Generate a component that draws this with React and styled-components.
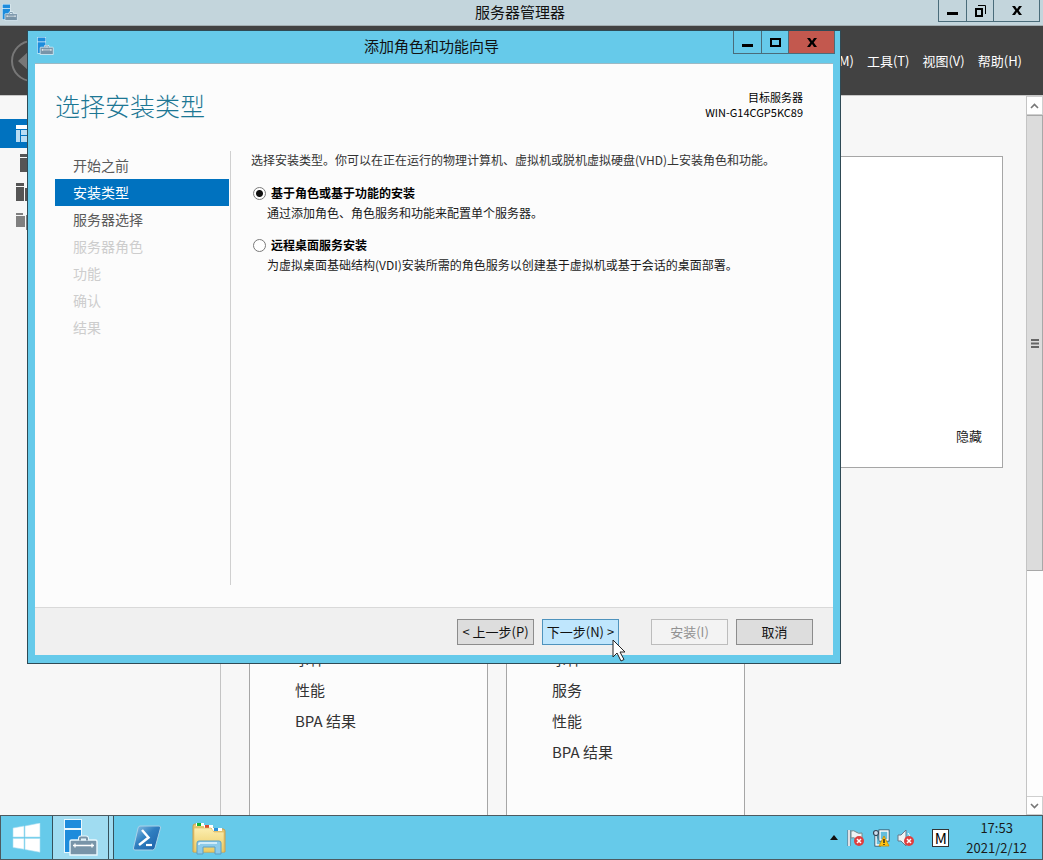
import { useState } from "react";
import styled, { createGlobalStyle, css } from "styled-components";

const GlobalStyle = createGlobalStyle`
  * {
    box-sizing: border-box;
  }
  body {
    margin: 0;
    overflow: hidden;
    font-family: "Noto Sans CJK SC", "Noto Sans", sans-serif;
    font-size: 12px;
    color: #1a1a1a;
  }
  button {
    font-family: inherit;
    padding: 0;
  }
`;

const Desktop = styled.div`
  position: relative;
  display: flex;
  flex-direction: column;
  height: 100vh;
  background: #f7f7f7;
`;

//shared by the two windows
const TitleBar = styled.header`
  display: grid;
  grid-template-columns: 1fr auto 1fr;
  align-items: start;
  flex: none;
  height: ${(props) => props.$height};
  padding-right: ${(props) => props.$right};
`;

const TitleIcon = styled.span`
  display: flex;
  padding: ${(props) => props.$padding};
`;

const TitleText = styled.h1`
  margin: 0;
  font-size: 15px;
  font-weight: 400;
  line-height: ${(props) => props.$line};
  color: #111;
`;

const WindowButtons = styled.div`
  display: flex;
  justify-self: end;
  border: 1px solid #4a6c7a;
  border-top: none;
`;

const WindowButton = styled.button`
  display: flex;
  align-items: center;
  justify-content: center;
  width: ${(props) => (props.$close ? "46px" : "27px")};
  height: ${(props) => props.$height || "22px"};
  border: none;
  border-left: ${(props) => (props.$first ? "none" : "1px solid #4a6c7a")};
  background: ${(props) => props.$color || "transparent"};
`;

const ManagerTitle = styled.div`
  flex: none;
  background: #c3d5dc;
  border-bottom: 1px solid #a3adb1;
`;

const Banner = styled.div`
  display: flex;
  flex: none;
  align-items: center;
  justify-content: space-between;
  height: 69px;
  padding: 0 21px 0 11px;
  background: #424242;
`;

const BackButton = styled.button`
  display: flex;
  border: none;
  background: none;
`;

const MenuBar = styled.nav`
  display: flex;
  gap: 13px;
`;

const MenuItem = styled.button`
  border: none;
  background: none;
  color: #fff;
  font-size: 13px;
  line-height: 20px;
`;

const ManagerBody = styled.div`
  display: flex;
  flex: 1;
  min-height: 0;
  border-top: 1px solid #c8c8c8;
`;

const SideBar = styled.nav`
  display: flex;
  flex-direction: column;
  flex: none;
  width: 221px;
  padding-top: 23px;
  border-right: 1px solid #c4c4c4;
`;

const SideLink = styled.button`
  display: flex;
  align-items: center;
  height: 29px;
  padding-left: 16px;
  border: none;
  background: ${(props) => (props.$selected ? "#0072bf" : "transparent")};
`;

const Dashboard = styled.main`
  display: flex;
  flex-direction: column;
  flex: 1;
  gap: 60px;
  min-width: 0;
  padding: 60px 23px 0 28px;
`;

const WelcomeCard = styled.section`
  display: flex;
  flex: none;
  align-items: flex-end;
  justify-content: flex-end;
  height: 312px;
  padding: 20px;
  border: 1px solid #a6a6a6;
  background: #fff;
`;

const HideButton = styled.button`
  border: none;
  background: none;
  color: #222;
  font-size: 13px;
  line-height: 22px;
`;

const Tiles = styled.div`
  display: flex;
  flex: 1;
  gap: 18px;
  min-height: 0;
`;

const Tile = styled.ul`
  width: 239px;
  margin: 0;
  padding: 114px 0 0 45px;
  border: 1px solid #a6a6a6;
  border-bottom: none;
  background: #fcfcfc;
  list-style: none;
`;

const TileRow = styled.li`
  font-size: 15px;
  line-height: 31px;
  color: #333;
`;

const ScrollBar = styled.div`
  display: flex;
  flex-direction: column;
  flex: none;
  width: 17px;
  border-left: 1px solid #c4c4c4;
  background: #fdfdfd;
`;

const ScrollButton = styled.button`
  display: flex;
  align-items: center;
  justify-content: center;
  height: 19px;
  border: 1px solid #cfcfcf;
  border-left: none;
  background: #fff;
`;

const ScrollTrack = styled.div`
  flex: 1;
`;

const ScrollThumb = styled.div`
  display: flex;
  align-items: center;
  justify-content: center;
  height: 67%;
  border: 1px solid #a8a8a8;
  border-left: none;
  background: #dcdcdc;
`;

const TaskBar = styled.footer`
  display: flex;
  flex: none;
  align-items: stretch;
  height: 45px;
  border: 1px solid #4d5a60;
  background: #66caea;
`;

const TaskButton = styled.button`
  display: flex;
  align-items: center;
  justify-content: center;
  width: ${(props) => props.$width};
  border: none;
  background: transparent;
  ${(props) =>
    props.$active &&
    css`
      border: 1px solid #35515c;
      border-width: 0 1px;
      background: #a0dcf1;
    `}
`;

const TaskStack = styled.span`
  width: 5px;
  border-right: 1px solid #35515c;
  background: #a0dcf1;
`;

const Tray = styled.div`
  display: flex;
  align-items: center;
  gap: 7px;
  margin-left: auto;
  padding-right: 15px;
`;

const TrayButton = styled.button`
  display: flex;
  border: none;
  background: none;
`;

const InputMode = styled.button`
  width: 17px;
  height: 18px;
  margin: 0 10px;
  border: 1px solid #333;
  background: #fff;
  color: #000;
  font-size: 15px;
  line-height: 16px;
`;

const Clock = styled.time`
  font-size: 13px;
  line-height: 20px;
  text-align: center;
`;

//wizard window, lies over the server manager
const Wizard = styled.section`
  position: absolute;
  top: 30px;
  right: 202px;
  bottom: 196px;
  left: 27px;
  display: flex;
  flex-direction: column;
  border: 1px solid #2f4a55;
  background: #66caea;
`;

const WizardClient = styled.form`
  display: flex;
  flex: 1;
  flex-direction: column;
  margin: 0 7px 8px;
  background: #fcfcfc;
  border-top: 1px solid #9db9c4;
`;

const WizardHead = styled.div`
  display: flex;
  align-items: flex-start;
  justify-content: space-between;
  height: 87px;
  padding: 26px 30px 0 20px;
`;

const WizardTitle = styled.h2`
  margin: 0;
  color: #1c7794;
  font-size: 25px;
  font-weight: 300;
  line-height: 30px;
`;

const Target = styled.p`
  margin: 0;
  font-size: 11px;
  line-height: 15px;
  text-align: right;
  color: #000;
`;

const WizardBody = styled.div`
  display: flex;
  flex: 1;
  padding: 0 20px 22px;
`;

const Steps = styled.nav`
  display: flex;
  flex-direction: column;
  flex: none;
  width: 176px;
  padding: 1px 1px 0 0;
  border-right: 1px solid #d0d0d0;
`;

const Step = styled.button`
  height: 27px;
  padding-left: 18px;
  border: none;
  background: ${(props) => (props.$selected ? "#0072bf" : "transparent")};
  color: ${(props) => (props.$selected ? "#fff" : "#5a5a5a")};
  font-size: 14px;
  line-height: 27px;
  text-align: left;
  &:disabled {
    color: #cdcdcd;
  }
`;

const Options = styled.fieldset`
  flex: 1;
  min-width: 0;
  margin: 0;
  padding: 0 0 0 20px;
  border: none;
`;

const Intro = styled.p`
  margin: 0 0 14px;
  line-height: 18px;
  color: #333;
`;

const Option = styled.div`
  margin-bottom: 12px;
`;

const OptionLabel = styled.label`
  display: flex;
  align-items: center;
  gap: 5px;
  padding-left: 2px;
  font-weight: 700;
  line-height: 20px;
  color: #000;
`;

const Radio = styled.input`
  appearance: none;
  width: 13px;
  height: 13px;
  margin: 0;
  border: 1px solid #7a7a7a;
  border-radius: 50%;
  background: #fff;
  &:checked {
    background: radial-gradient(circle, #111 3px, #fff 4px);
  }
`;

const OptionText = styled.p`
  margin: 0;
  padding-left: 16px;
  line-height: 20px;
`;

const WizardFoot = styled.div`
  display: flex;
  justify-content: flex-end;
  gap: 8px;
  height: 48px;
  padding: 11px 20px 0 0;
  border-top: 1px solid #d9d9d9;
  background: #f0f0f0;
`;

const FootButton = styled.button`
  position: relative;
  width: 77px;
  height: 26px;
  margin-right: ${(props) => (props.$primary ? "24px" : "0")};
  border: 1px solid ${(props) => (props.$primary ? "#4f93bd" : "#8c8c8c")};
  background: ${(props) => (props.$primary ? "#bfe6fd" : "#dddddd")};
  color: #111;
  font-size: 13px;
  line-height: 20px;
  white-space: nowrap;
  &:disabled {
    border-color: #bcbcbc;
    background: #f3f3f3;
    color: #919191;
  }
`;

const Pointer = styled.svg`
  position: absolute;
  top: 19px;
  left: 69px;
`;

const ServerIcon = ({ width = 16, height = 17 }) => (
  <svg width={width} height={height} viewBox="0 0 34 37">
    <path d="M0 0h18v34H0z" fill="#e9f7fd" />
    <path d="M1 1h16v8H1zM1 11h16v22H1z" fill="#1d8cdc" />
    <path d="M16 22v-2.500q0-1 1-1h5q1 0 1 1V22" fill="none" stroke="#e9f7fd" strokeWidth="4" />
    <path d="M6 22.500q0-1.500 1.500-1.500h24q1.500 0 1.500 1.500V36H6z" fill="#7894a8" stroke="#e9f7fd" strokeWidth="1.400" />
    <path d="M16 21.500v-2q0-1 1-1h5q1 0 1 1v2" fill="none" stroke="#7894a8" strokeWidth="2" />
    <path d="M9 26.500h21M11 24.500v4M28 24.500v4" stroke="#fff" strokeWidth="1.300" />
  </svg>
);

const MinimizeIcon = () => (
  <svg width="11" height="11">
    <path d="M0 7h11v3H0z" />
  </svg>
);

const MaximizeIcon = () => (
  <svg width="11" height="9">
    <path d="M1 1h9v7H1z" fill="none" stroke="#000" strokeWidth="2" />
  </svg>
);

const RestoreIcon = () => (
  <svg width="11" height="12">
    <path d="M3 .500h7.500V9" fill="none" stroke="#000" />
    <path d="M1 4h6v7H1z" fill="none" stroke="#000" strokeWidth="2" />
  </svg>
);

const CloseIcon = () => (
  <svg width="10" height="9">
    <path d="M0 0h3l2 3 2-3h3L6.700 4.500 10 9H7L5 6 3 9H0l3.300-4.500z" />
  </svg>
);

const BackIcon = () => (
  <svg width="42" height="42" viewBox="0 0 42 42">
    <circle cx="21" cy="21" r="20" fill="none" stroke="#777" strokeWidth="2" />
    <path d="M7 21l11-10v7h15v6H18v7z" fill="#777" />
  </svg>
);

const Chevron = ({ down }) => (
  <svg width="9" height="6">
    <path d={down ? "M1 1l3.500 3.500L8 1" : "M1 5l3.500-3.500L8 5"} fill="none" stroke="#777" strokeWidth="1.600" />
  </svg>
);

const sideIcons = [
  <svg key="dashboard" width="18" height="17">
    <path d="M0 0h18v4H0z" fill="#fff" />
    <path d="M0 5h4v12H0zM5 5h6v5H5zM5 11h6v6H5zM12 5h6v12h-6z" fill="#b9dcf3" />
  </svg>,
  <svg key="local" width="18" height="18">
    <path d="M4 0h12v3H4zM4 4h12v14H4z" fill="#555" />
  </svg>,
  <svg key="all" width="18" height="18">
    <path d="M0 0h8v3H0zM0 4h8v14H0zM9 5h8v13H9z" fill="#555" />
  </svg>,
  <svg key="files" width="18" height="18">
    <path d="M0 1h7v2H0zM0 4h9v11H0zM10 3h7v15h-7z" fill="#808080" />
  </svg>,
];

const WindowsIcon = () => (
  <svg width="30" height="30" viewBox="0 0 30 30" fill="#fff" stroke="#a8def2" strokeWidth="0.600">
    <path d="M1 5l11-2v11H1zM13 3l15-3v14H13zM1 15.500h11v10.700L1 24.500zM13 15.500h15v13.800l-15-2.800z" />
  </svg>
);

const PowerShellIcon = () => (
  <svg width="30" height="28" viewBox="0 0 30 28">
    <defs>
      <linearGradient id="shell" x1="0" y1="0" x2="1" y2="1">
        <stop offset="0" stopColor="#8fc6e8" />
        <stop offset="0.45" stopColor="#2f7fc0" />
        <stop offset="1" stopColor="#1d5ea6" />
      </linearGradient>
    </defs>
    <path d="M8 2h19q2 0 1.500 2L23 24q-.5 2-2.500 2H3q-2 0-1.500-2L6 4q.5-2 2-2z" fill="url(#shell)" stroke="#a9d2e8" />
    <path d="M10 6l6.500 7.500L7 21" fill="none" stroke="#fff" strokeWidth="2.500" />
    <path d="M14 21h6" stroke="#fff" strokeWidth="2.200" />
  </svg>
);

const FolderIcon = () => (
  <svg width="34" height="34" viewBox="0 0 34 34">
    <defs>
      <linearGradient id="folder" x1="0" y1="0" x2="0" y2="1">
        <stop offset="0" stopColor="#fbeeb0" />
        <stop offset="1" stopColor="#eccb62" />
      </linearGradient>
    </defs>
    <path d="M1 31V5q0-2 2-2h7l2 2h8l2 3h9q2 0 2 2v21z" fill="#e8c873" stroke="#c79e4c" />
    <path d="M4 2h8v3H4zM12 4h9v3h-9zM20 7h10v3H20z" fill="#fff" />
    <path d="M5 2h4v3H5z" fill="#13b535" />
    <path d="M13 4h4v3h-4z" fill="#d94e31" />
    <path d="M22 7h4v3h-4z" fill="#2990dc" />
    <path d="M2 7h17l3 4h10v20H2z" fill="url(#folder)" stroke="#dbb65c" strokeWidth="0.600" />
    <path d="M5 33V22q0-2 2-2h20q2 0 2 2v11h-6v-7H11v7z" fill="#8dcbea" stroke="#5b9fc5" />
    <path d="M7 24v-1q0-1 1-1h17" fill="none" stroke="#e6f7ff" strokeWidth="1.500" />
  </svg>
);

const ErrorBadge = ({ x, y }) => (
  <g>
    <circle cx={x} cy={y} r="5" fill="#df3f3f" />
    <path d={`M${x - 2} ${y - 2}l4 4m0-4l-4 4`} stroke="#fff" strokeWidth="1.500" />
  </g>
);

const trayIcons = [
  {
    label: "操作中心",
    icon: (
      <svg width="18" height="18">
        <path d="M2 1v16" stroke="#667" strokeWidth="3" />
        <path d="M2 1v16" stroke="#fff" strokeWidth="1.600" />
        <path d="M4 2q3-1 5 1t6 1v7q-4 1-6-1t-5-1z" fill="#eef3f5" stroke="#788" />
        <ErrorBadge x={12} y={12} />
      </svg>
    ),
  },
  {
    label: "网络",
    icon: (
      <svg width="18" height="18">
        <path d="M8 2h8v9H8zM4 7v9h5" fill="#65bddb" stroke="#345" strokeWidth="3" />
        <path d="M8 2h8v9H8zM4 7v9h5" fill="#65bddb" stroke="#fff" strokeWidth="1.400" />
        <circle cx="4" cy="4" r="2.500" fill="#cde" stroke="#345" strokeWidth="1.200" />
        <path d="M12 7l5 10H7z" fill="#ffc414" stroke="#c98a00" strokeWidth="0.800" />
        <path d="M12 10v4M12 15v1" stroke="#222" strokeWidth="1.400" />
      </svg>
    ),
  },
  {
    label: "音量",
    icon: (
      <svg width="18" height="18">
        <path d="M1 6h3l5-5v16l-5-5H1z" fill="#edf3f5" stroke="#678" />
        <path d="M11 4q2 2 2 5" fill="none" stroke="#fff" />
        <ErrorBadge x={12} y={12} />
      </svg>
    ),
  },
];

const menus = ["管理(M)", "工具(T)", "视图(V)", "帮助(H)"];

const tiles = [
  ["事件", "性能", "BPA 结果"],
  ["事件", "服务", "性能", "BPA 结果"],
];

const steps = [
  { name: "开始之前" },
  { name: "安装类型", selected: true },
  { name: "服务器选择" },
  { name: "服务器角色", disabled: true },
  { name: "功能", disabled: true },
  { name: "确认", disabled: true },
  { name: "结果", disabled: true },
];

const installTypes = [
  {
    id: "role",
    name: "基于角色或基于功能的安装",
    text: "通过添加角色、角色服务和功能来配置单个服务器。",
  },
  {
    id: "remote",
    name: "远程桌面服务安装",
    text: "为虚拟桌面基础结构(VDI)安装所需的角色服务以创建基于虚拟机或基于会话的桌面部署。",
  },
];

const ServerManager = () => (
  <>
    <ManagerTitle>
      <TitleBar $height="25px" $right="3px">
        <TitleIcon $padding="4px 2px">
          <ServerIcon />
        </TitleIcon>
        <TitleText $line="24px">服务器管理器</TitleText>
        <WindowButtons>
          <WindowButton $first $height="21px" aria-label="最小化">
            <MinimizeIcon />
          </WindowButton>
          <WindowButton $height="21px" aria-label="还原">
            <RestoreIcon />
          </WindowButton>
          <WindowButton $close $height="21px" aria-label="关闭">
            <CloseIcon />
          </WindowButton>
        </WindowButtons>
      </TitleBar>
    </ManagerTitle>
    <Banner>
      <BackButton aria-label="后退">
        <BackIcon />
      </BackButton>
      <MenuBar>
        {menus.map((menu) => (
          <MenuItem key={menu}>{menu}</MenuItem>
        ))}
      </MenuBar>
    </Banner>
    <ManagerBody>
      <SideBar>
        {sideIcons.map((icon, index) => (
          <SideLink key={icon.key} $selected={index === 0} aria-label={icon.key}>
            {icon}
          </SideLink>
        ))}
      </SideBar>
      <Dashboard>
        <WelcomeCard>
          <HideButton>隐藏</HideButton>
        </WelcomeCard>
        <Tiles>
          {tiles.map((rows, index) => (
            <Tile key={index}>
              {rows.map((row) => (
                <TileRow key={row}>{row}</TileRow>
              ))}
            </Tile>
          ))}
        </Tiles>
      </Dashboard>
      <ScrollBar>
        <ScrollButton aria-label="向上滚动">
          <Chevron />
        </ScrollButton>
        <ScrollTrack>
          <ScrollThumb>
            <svg width="8" height="9">
              <path d="M0 1h8M0 4.500h8M0 8h8" stroke="#666" strokeWidth="2" />
            </svg>
          </ScrollThumb>
        </ScrollTrack>
        <ScrollButton aria-label="向下滚动">
          <Chevron down />
        </ScrollButton>
      </ScrollBar>
    </ManagerBody>
  </>
);

const AddRolesWizard = () => {
  const [type, setType] = useState("role");

  return (
    <Wizard>
      <TitleBar $height="32px" $right="5px">
        <TitleIcon $padding="6px 9px">
          <ServerIcon width={17} height={18} />
        </TitleIcon>
        <TitleText $line="30px">添加角色和功能向导</TitleText>
        <WindowButtons>
          <WindowButton $first aria-label="最小化">
            <MinimizeIcon />
          </WindowButton>
          <WindowButton aria-label="最大化">
            <MaximizeIcon />
          </WindowButton>
          <WindowButton $close $color="#c3584e" aria-label="关闭">
            <CloseIcon />
          </WindowButton>
        </WindowButtons>
      </TitleBar>
      <WizardClient onSubmit={(e) => e.preventDefault()}>
        <WizardHead>
          <WizardTitle>选择安装类型</WizardTitle>
          <Target>
            目标服务器
            <br />
            WIN-G14CGP5KC89
          </Target>
        </WizardHead>
        <WizardBody>
          <Steps>
            {steps.map((step) => (
              <Step key={step.name} type="button" $selected={step.selected} disabled={step.disabled}>
                {step.name}
              </Step>
            ))}
          </Steps>
          <Options>
            <Intro>
              选择安装类型。你可以在正在运行的物理计算机、虚拟机或脱机虚拟硬盘(VHD)上安装角色和功能。
            </Intro>
            {installTypes.map((item) => (
              <Option key={item.id}>
                <OptionLabel htmlFor={item.id}>
                  <Radio
                    type="radio"
                    name="type"
                    id={item.id}
                    checked={type === item.id}
                    onChange={() => setType(item.id)}
                  />
                  {item.name}
                </OptionLabel>
                <OptionText>{item.text}</OptionText>
              </Option>
            ))}
          </Options>
        </WizardBody>
        <WizardFoot>
          <FootButton type="button">&lt; 上一步(P)</FootButton>
          <FootButton $primary>
            下一步(N) &gt;
            <Pointer width="14" height="24" viewBox="0 0 14 24">
              <path d="M1 1v17l4-4 4 8 3-1.500-4-7.500h5z" fill="#fff" stroke="#222" />
            </Pointer>
          </FootButton>
          <FootButton type="button" disabled>
            安装(I)
          </FootButton>
          <FootButton type="button">取消</FootButton>
        </WizardFoot>
      </WizardClient>
    </Wizard>
  );
};

const App = () => {
  return (
    <Desktop>
      <GlobalStyle />
      <ServerManager />
      <TaskBar>
        <TaskButton $width="51px" aria-label="开始">
          <WindowsIcon />
        </TaskButton>
        <TaskButton $width="57px" $active aria-label="服务器管理器">
          <ServerIcon width={34} height={37} />
        </TaskButton>
        <TaskStack />
        <TaskButton $width="66px" aria-label="PowerShell">
          <PowerShellIcon />
        </TaskButton>
        <TaskButton $width="58px" aria-label="文件资源管理器">
          <FolderIcon />
        </TaskButton>
        <Tray>
          <TrayButton aria-label="显示隐藏的图标">
            <svg width="12" height="5">
              <path d="M2 5l4-5 4 5z" fill="#111" />
            </svg>
          </TrayButton>
          {trayIcons.map((item) => (
            <TrayButton key={item.label} aria-label={item.label}>
              {item.icon}
            </TrayButton>
          ))}
          <InputMode>M</InputMode>
          <Clock>
            17:53
            <br />
            2021/2/12
          </Clock>
        </Tray>
      </TaskBar>
      <AddRolesWizard />
    </Desktop>
  );
};

export default App;
